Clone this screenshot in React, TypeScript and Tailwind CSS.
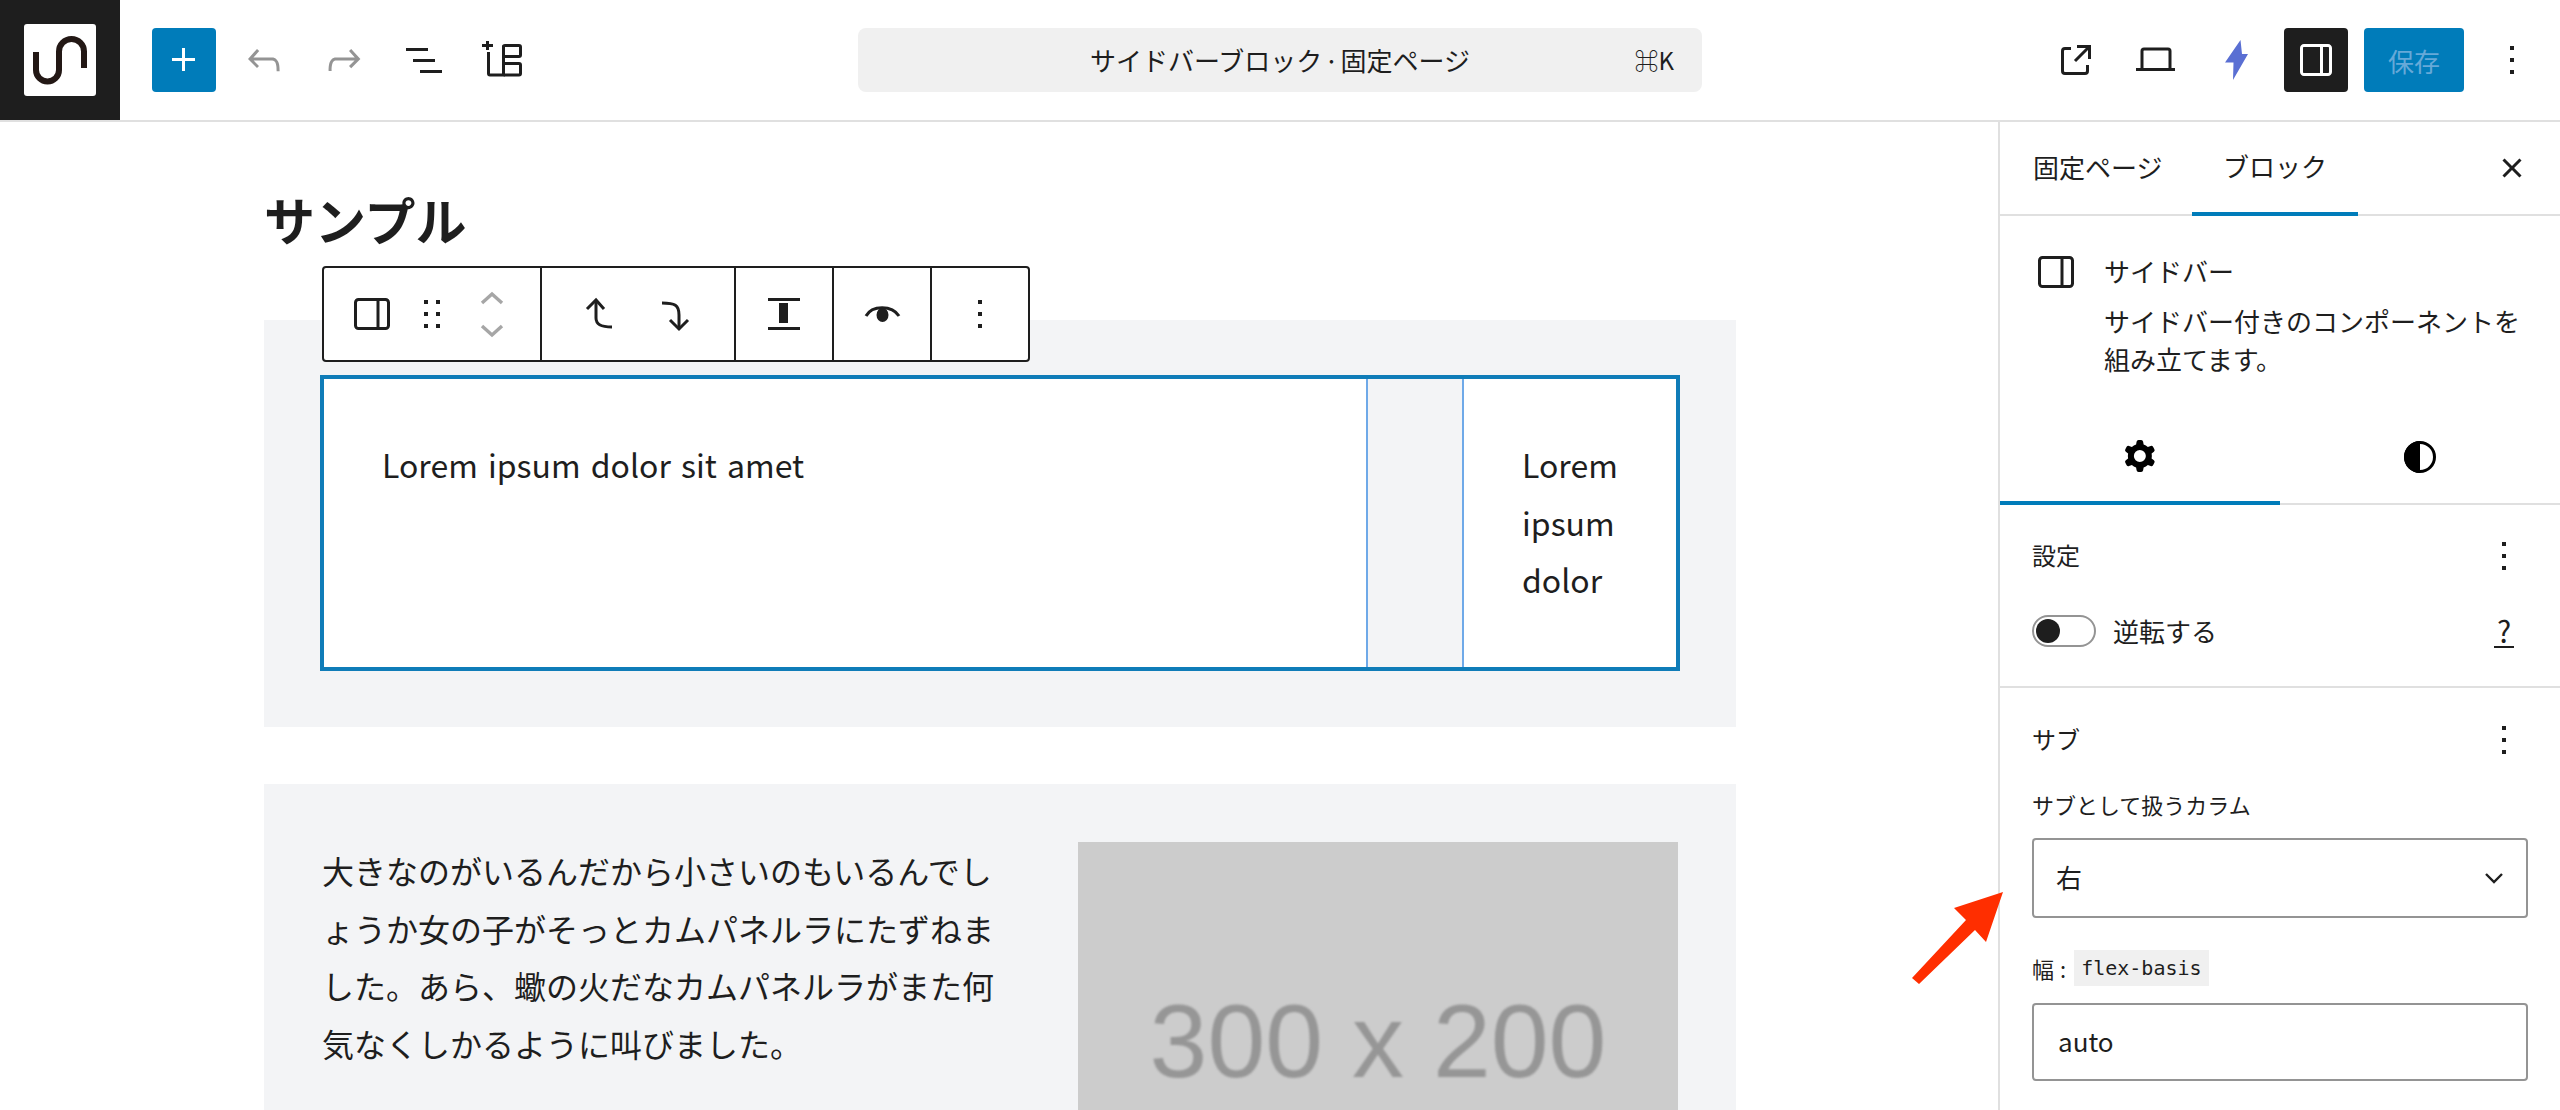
import React from "react";

const Ink = ({ d, className = "", size = 48 }: { d: string; className?: string; size?: number }) => (
	<svg width={size} height={size} viewBox="0 0 24 24" fill="currentColor" fillRule="evenodd" className={`shrink-0 ${className}`}>
		<path d={d} />
	</svg>
);

const kebab = "M13 19h-2v-2h2v2zm0-6h-2v-2h2v2zm0-6h-2V5h2v2z";
const sidebarIcon =
	"M18 4H6c-1.1 0-2 .9-2 2v12c0 1.1.9 2 2 2h12c1.1 0 2-.9 2-2V6c0-1.1-.9-2-2-2zm-4 14.5H6c-.3 0-.5-.2-.5-.5V6c0-.3.2-.5.5-.5h8v13zm4.5-.5c0 .3-.2.5-.5.5h-2.5v-13H18c.3 0 .5.2.5.5v12z";
const cog =
	"M10.289 4.836A1 1 0 0 1 11.275 4h1.306a1 1 0 0 1 .987.836l.244 1.466c.787.26 1.503.679 2.108 1.218l1.393-.522a1 1 0 0 1 1.216.437l.653 1.13a1 1 0 0 1-.23 1.273l-1.148.944a6.025 6.025 0 0 1 0 2.435l1.149.946a1 1 0 0 1 .23 1.272l-.653 1.13a1 1 0 0 1-1.216.437l-1.394-.522c-.605.54-1.32.958-2.108 1.218l-.244 1.466a1 1 0 0 1-.987.836h-1.306a1 1 0 0 1-.986-.836l-.244-1.466a5.995 5.995 0 0 1-2.108-1.218l-1.394.522a1 1 0 0 1-1.217-.436l-.653-1.131a1 1 0 0 1 .23-1.272l1.149-.946a6.026 6.026 0 0 1 0-2.435l-1.148-.944a1 1 0 0 1-.23-1.272l.653-1.131a1 1 0 0 1 1.217-.437l1.393.522a5.994 5.994 0 0 1 2.108-1.218l.244-1.466ZM14.929 12a3 3 0 1 1-6 0 3 3 0 0 1 6 0Z";

const BlockIcon = ({ className = "" }: { className?: string }) => (
	<svg width="48" height="48" viewBox="0 0 48 48" fill="none" stroke="#1e1e1e" strokeWidth="3" className={`shrink-0 ${className}`}>
		<rect x="7.5" y="9.5" width="33" height="29" rx="3" />
		<path d="M30 9.5V38.5" />
	</svg>
);

const Logo = () => (
	<div className="flex h-[120px] w-[120px] shrink-0 items-center justify-center bg-[#1e1e1e]">
		<div className="h-[72px] w-[72px] rounded-[3px] bg-white">
			<svg width="72" height="72" viewBox="0 0 72 72" fill="none" stroke="#231815" strokeWidth="6">
				<path d="M12 28V46A11.5 11.5 0 0 0 35 46V27.5A12.5 12.5 0 0 1 60 27.5V44" />
			</svg>
		</div>
	</div>
);

const PatternIcon = () => (
	<svg width="48" height="48" viewBox="0 0 48 48" fill="none" stroke="#1e1e1e" strokeWidth="3" className="shrink-0">
		<path d="M2 9.5H13M7.5 5V14" />
		<path d="M8.5 16V37.5a1.5 1.5 0 0 0 1.5 1.5H23.5V9.5" />
		<rect x="23.5" y="9.5" width="17" height="11" rx="1.5" />
		<rect x="23.5" y="27.5" width="17" height="11.5" rx="1.5" />
	</svg>
);

const TopBar = () => (
	<header className="grid h-[122px] grid-cols-[1fr_844px_1fr] border-b-2 border-[#e0e0e0] bg-white">
		<div className="flex items-start">
			<Logo />
			<div className="ml-[32px] mt-[28px] flex h-[64px] w-[64px] items-center justify-center rounded-[4px] bg-[#007cba] text-white">
				<Ink d="M11 12.5V17.5H12.5V12.5H17.5V11H12.5V6H11V11H6V12.5H11Z" />
			</div>
			<div className="ml-[24px] mt-[36px] flex gap-[32px] text-[#1e1e1e]">
				<Ink className="text-[#949494]" d="M18.3 11.7c-.6-.6-1.4-.9-2.3-.9H6.7l2.9-3.3-1.1-1-4.5 5L8.5 16l1-1-2.7-2.7H16c.5 0 .9.2 1.3.5 1 1 1 3.4 1 4.5v.3h1.5v-.2c0-1.5 0-4.3-1.5-5.7z" />
				<Ink className="text-[#949494]" d="M15.6 6.5l-1.1 1 2.9 3.3H8c-.9 0-1.7.3-2.3.9-1.4 1.5-1.4 4.2-1.4 5.6v.2h1.5v-.3c0-1.1 0-3.5 1-4.5.3-.3.7-.5 1.3-.5h9.2L14.5 15l1.1 1.1 4.6-4.6-4.6-5z" />
				<Ink d="M3 6h11v1.5H3V6Zm3.5 5.5h11V13h-11v-1.5ZM21 17H10v1.5h11V17Z" />
				<PatternIcon />
			</div>
		</div>
		<div className="pt-[28px]">
			<div className="grid h-[64px] grid-cols-[1fr_auto_1fr] items-center rounded-[8px] bg-[#f0f0f0] text-[26px] text-[#1e1e1e]">
				<span />
				<span className="pb-[2px] [word-spacing:-4px]">サイドバーブロック · 固定ページ</span>
				<span className="justify-self-end pr-[28px] text-[24px]">⌘K</span>
			</div>
		</div>
		<div className="flex items-start justify-end pr-[24px] pt-[28px] text-[#1e1e1e]">
			<div className="mt-[8px] flex">
				<Ink d="M19.5 4.5h-7V6h4.44l-5.97 5.97 1.06 1.06L18 7.06v4.44h1.5v-7Zm-13 1a2 2 0 0 0-2 2v10a2 2 0 0 0 2 2h10a2 2 0 0 0 2-2v-3H17v3a.5.5 0 0 1-.5.5h-10a.5.5 0 0 1-.5-.5v-10a.5.5 0 0 1 .5-.5h3V5.5h-3Z" />
				<svg width="48" height="48" viewBox="0 0 48 48" fill="none" stroke="#1e1e1e" strokeWidth="3" className="ml-[31px] shrink-0">
					<path d="M11 33.5V15a2 2 0 0 1 2-2H37a2 2 0 0 1 2 2V33.5" />
					<path d="M5 33.5H44" />
				</svg>
				<svg width="48" height="48" viewBox="0 0 48 48" fill="#5a6fd3" className="ml-[33px] shrink-0">
					<path d="M28.5 4L13 26.5H21.5L21 44L36 18H30Z" />
				</svg>
			</div>
			<div className="ml-[24px] flex h-[64px] w-[64px] items-center justify-center rounded-[4px] bg-[#1e1e1e] text-white">
				<Ink d={sidebarIcon} />
			</div>
			<div className="ml-[16px] flex h-[64px] w-[100px] items-center justify-center rounded-[4px] bg-[#007cba] text-[26px] text-[#66a9d8]">
				保存
			</div>
			<Ink className="ml-[24px] mt-[8px]" d={kebab} />
		</div>
	</header>
);

const BlockToolbar = () => (
	<div className="absolute left-[58px] top-[-54px] z-10 flex h-[96px] w-[708px] rounded-[4px] border-2 border-[#1e1e1e] bg-white text-[#1e1e1e]">
		<div className="flex w-[218px] items-center gap-[12px] border-r-2 border-[#1e1e1e] pl-[24px]">
			<BlockIcon />
			<Ink d="M8 7h2V5H8v2zm0 6h2v-2H8v2zm0 6h2v-2H8v2zm6-14v2h2V5h-2zm0 8h2v-2h-2v2zm0 6h2v-2h-2v2z" />
			<svg width="48" height="48" viewBox="0 0 24 24" fill="none" stroke="#a6a6a6" strokeWidth="1.7" className="shrink-0">
				<path d="M7 6.5L12 2L17 6.5" />
				<path d="M7 18L12 22.5L17 18" />
			</svg>
		</div>
		<div className="flex w-[194px] items-center gap-[28px] border-r-2 border-[#1e1e1e] pl-[33px]">
			<svg width="48" height="48" viewBox="0 0 48 48" fill="none" stroke="#1e1e1e" strokeWidth="3" className="shrink-0">
				<path d="M12 19L21 10L29 19" />
				<path d="M21 11V28C21 34 25 37 37 37" />
			</svg>
			<svg width="48" height="48" viewBox="0 0 48 48" fill="none" stroke="#1e1e1e" strokeWidth="3" className="shrink-0">
				<path d="M11 13C24 13 28 15 28 25V38" />
				<path d="M19 30L28 39L37 30" />
			</svg>
		</div>
		<div className="flex w-[98px] items-center justify-center border-r-2 border-[#1e1e1e]">
			<svg width="48" height="48" viewBox="0 0 48 48" fill="#1e1e1e" className="shrink-0">
				<rect x="8" y="8" width="32" height="3" />
				<rect x="19" y="13" width="9" height="20" />
				<rect x="8" y="37" width="32" height="3" />
			</svg>
		</div>
		<div className="flex w-[98px] items-center justify-center border-r-2 border-[#1e1e1e]">
			<svg width="48" height="48" viewBox="0 0 48 48" fill="none" className="shrink-0">
				<path d="M8 26C14 15 34 15 41 26" stroke="#1e1e1e" strokeWidth="3" />
				<ellipse cx="24.5" cy="25" rx="6" ry="7" fill="#1e1e1e" />
			</svg>
		</div>
		<div className="flex flex-1 items-center justify-center">
			<Ink d={kebab} />
		</div>
	</div>
);

const Canvas = () => (
	<main className="min-w-0 flex-1 overflow-hidden">
		<div className="ml-[264px] w-[1472px] pt-[58px] text-[32px] leading-[57.6px] text-[#1e1e1e]">
			<h1 className="mb-[62px] text-[51px] font-bold leading-[78px]">サンプル</h1>
			<section className="relative bg-[#f3f4f6] px-[56px] pb-[56px] pt-[55px]">
				<BlockToolbar />
				<div className="flex h-[296px] border-4 border-[#0f7cb8] bg-white">
					<div className="flex-1 border-r-2 border-[#6fa9e8] pl-[58px] pt-[57px] [word-spacing:3px]">Lorem ipsum dolor sit amet</div>
					<div className="w-[94px] bg-[#f3f4f6]" />
					<div className="w-[214px] border-l-2 border-[#6fa9e8] pl-[58px] pt-[57px]">
						Lorem
						<br />
						ipsum
						<br />
						dolor
					</div>
				</div>
			</section>
			<section className="mt-[57px] flex justify-between bg-[#f3f4f6] py-[58px] pl-[58px] pr-[58px]">
				<p className="w-[680px] [line-break:loose]">
					大きなのがいるんだから小さいのもいるんでしょうか女の子がそっとカムパネルラにたずねました。あら、蠍の火だなカムパネルラがまた何気なくしかるように叫びました。
				</p>
				<div className="flex h-[400px] w-[600px] items-center justify-center bg-[#cccccc]">
					<span className="font-['Liberation_Sans',sans-serif] text-[104px] text-[#969696] blur-[1px]">300 x 200</span>
				</div>
			</section>
		</div>
	</main>
);

const Sidebar = () => (
	<aside className="w-[562px] shrink-0 overflow-hidden border-l-2 border-[#e0e0e0] bg-white text-[#1e1e1e]">
		<div className="flex h-[94px] items-center border-b-2 border-[#e0e0e0] text-[26px]">
			<div className="w-[192px] pb-[3px] pl-[33px]">固定ページ</div>
			<div className="-mb-[2px] flex h-[94px] w-[166px] items-center justify-center border-b-4 border-[#007cba] pb-[3px]">ブロック</div>
			<Ink className="ml-[130px]" d="M12 13.06l3.712 3.713 1.061-1.06L13.061 12l3.712-3.712-1.06-1.06L12 10.938 8.288 7.227l-1.061 1.06L10.939 12l-3.712 3.712 1.06 1.061L12 13.061z" />
		</div>

		<div className="flex pl-[32px] pr-[20px] pt-[32px] text-[26px] leading-[38px]">
			<BlockIcon className="mr-[24px]" />
			<div className="pt-[4px]">
				<p>サイドバー</p>
				<p className="mt-[12px]">サイドバー付きのコンポーネントを組み立てます。</p>
			</div>
		</div>
		<div className="mt-[32px] flex h-[95px] border-b-2 border-[#e0e0e0] text-black">
			<div className="-mb-[1px] flex h-[95px] w-[280px] items-center justify-center border-b-4 border-[#007cba]">
				<Ink d={cog} />
			</div>
			<div className="flex h-[93px] w-[280px] items-center justify-center">
				<svg width="48" height="48" viewBox="0 0 48 48" className="shrink-0">
					<circle cx="24" cy="24" r="14.5" fill="none" stroke="#000" strokeWidth="3" />
					<path d="M24 8A16 16 0 0 0 24 40Z" fill="#000" />
				</svg>
			</div>
		</div>

		<div className="border-b-2 border-[#e0e0e0] pb-[39px] pl-[32px] pr-[32px] pt-[27px]">
			<div className="flex h-[48px] items-center justify-between text-[24px]">
				<span className="pb-[2px]">設定</span>
				<Ink d={kebab} />
			</div>
			<div className="mt-[35px] flex h-[32px] items-center text-[26px]">
				<div className="flex h-[32px] w-[64px] items-center rounded-full border-2 border-[#949494] pl-[2px]">
					<div className="h-[24px] w-[24px] rounded-full bg-[#1e1e1e]" />
				</div>
				<span className="ml-[17px] pb-[2px]">逆転する</span>
				<span className="ml-auto mr-[14px] w-[20px] border-b-2 border-[#1e1e1e] text-center text-[30px] leading-[32px]">?</span>
			</div>
		</div>

		<div className="pl-[32px] pr-[32px] pt-[28px]">
			<div className="flex h-[48px] items-center justify-between text-[24px]">
				<span className="pb-[2px]">サブ</span>
				<Ink d={kebab} />
			</div>
			<div className="mt-[24px] text-[22px] leading-[33px]">サブとして扱うカラム</div>
			<div className="mt-[17px] flex h-[80px] items-center justify-between rounded-[4px] border-2 border-[#949494] pb-[4px] pl-[22px] pr-[20px] text-[26px]">
				<span>右</span>
				<svg width="24" height="24" viewBox="0 0 24 24" fill="none" stroke="#1e1e1e" strokeWidth="2.4" className="mt-[4px] shrink-0">
					<path d="M4 8L12 16L20 8" />
				</svg>
			</div>
			<div className="mt-[32px] flex h-[36px] items-center text-[22px]">
				<span>幅</span>
				<span className="ml-[6px]">:</span>
				<code className="ml-[8px] bg-[#f0f0f0] px-[7px] font-['DejaVu_Sans_Mono',monospace] text-[20px] leading-[36px]">flex-basis</code>
			</div>
			<div className="mt-[17px] flex h-[78px] items-center rounded-[4px] border-2 border-[#949494] pb-[4px] pl-[24px] text-[26px]">auto</div>
		</div>
	</aside>
);

const App = () => (
	<div className="relative h-[1110px] w-[2560px] overflow-hidden bg-white font-['Noto_Sans_CJK_JP',sans-serif]">
		<TopBar />
		<div className="flex h-[988px]">
			<Canvas />
			<Sidebar />
		</div>
		<svg width="110" height="110" viewBox="1905 885 110 110" className="absolute left-[1905px] top-[885px]">
			<polygon points="2003,892 1954,908 1966,920 1912,978 1919,984 1975,930 1986,942" fill="#ff2e00" />
		</svg>
	</div>
);

export default App;
